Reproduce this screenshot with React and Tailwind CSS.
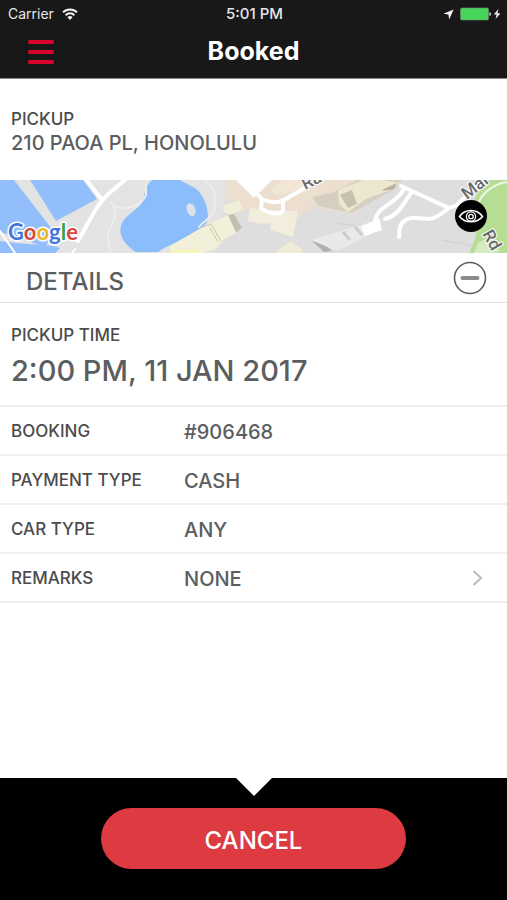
import React from 'react';

const details = [
  { label: "BOOKING", value: "#906468" },
  { label: "PAYMENT TYPE", value: "CASH" },
  { label: "CAR TYPE", value: "ANY" },
  { label: "REMARKS", value: "NONE", more: true },
];

function StatusBar() {
  return (
    <div className="grid grid-cols-3 items-center h-7 pl-2 pr-1.5 text-sm text-gray-200">
      <div className="flex items-center gap-2">
        <span className="font-normal">Carrier</span>
        <svg width="16" height="12" viewBox="0 0 16 12" fill="none" stroke="#f3f3f3" strokeWidth="2">
          <path d="M1 4.4a10 10 0 0 1 14 0" />
          <path d="M3.6 7.2a6.2 6.2 0 0 1 8.8 0" />
          <path d="M8 12 5.4 9.3a3.8 3.8 0 0 1 5.2 0z" fill="#f3f3f3" stroke="none" />
        </svg>
      </div>
      <span className="text-center text-[15px] font-medium">5:01 PM</span>
      <div className="flex items-center justify-end gap-1.5">
        <svg width="11" height="11" viewBox="0 0 11 11" fill="#f3f3f3">
          <path d="M10.6.4 6.2 10.6 5.4 5.6.4 4.8z" />
        </svg>
        {/* battery and charging bolt */}
        <svg width="41" height="14" viewBox="0 0 41 14">
          <rect x="0.5" y="1" width="28" height="12" rx="1.5" fill="#46d559" stroke="#7b8f7d" strokeWidth="0.6" />
          <path d="M29.4 5q1.8.4 1.8 2t-1.8 2z" fill="#d0d0d0" />
          <path d="M38.4 2 33.8 7.6h2.8L35.6 12l4.8-5.8h-3z" fill="#f3f3f3" />
        </svg>
      </div>
    </div>
  );
}

function MapArt() {
  return (
    <svg className="block w-full h-full" viewBox="0 0 507 73" preserveAspectRatio="xMidYMid slice">
      <rect width="507" height="73" fill="#dedede" />
      {/* land and water */}
      <path d="M0 0h230l-16 73H0z" fill="#e2e3e2" />
      <path d="M0 0h14l38 49-6 18L0 52z" fill="#92bffc" />
      <path d="M30 0h53l14 19-41 22z" fill="#92bffc" />
      <path d="M0 61l16 2 38 3 6 2-5 5H0z" fill="#92bffc" />
      <path d="M152 0c-5 5-7 9-8 17-1 11-16 15-22 26-5 12 3 22 14 29h22c10-7 22-11 33-17 9-5 16-9 17-18 0-9-3-17-8-24-4-6-12-8-20-13z" fill="#8bbcfb" />
      <path d="M187 25c3-3 7-1 8 3 1 3 1 7-2 8-4 1-8-7-6-11z" fill="#dbe3e8" />
      {/* blocks and buildings */}
      <path d="M228 0h175l2 11-52 24-40-9-16 13-47-10-17 5c-3-12-6-15-9-20z" fill="#ecdfd0" />
      <path d="M353 34 316 28l-18 14-5 18-24-15-26 5-18 23h170l40-73h-43z" fill="#dedede" />
      <path d="M223 26l16-6 3 9-12 6-6-3z" fill="#f1eed9" />
      <path d="M250 28l18 2 30 1-5 26-23-7 1-7-10 1-13-3z" fill="#f2eddc" />
      <path d="M170 66l31-18 27-13 8 18-12 6-7 9-14 5h-33z" fill="#f2f0d8" />
      <path d="M170 70l28-1 3 4h-31z" fill="#f5f5bd" />
      <path d="M228 35l6-1 8 14-6 4z" fill="#c4beae" />
      <path d="M203 47l8-3 10 17m-11-13 8 14" fill="none" stroke="#cbc7b4" />
      <path d="M277 71l14-10 12 9-2 3h-24z" fill="#efedd5" />
      <path d="M271 11l11-11h34l-14 10-26 5z" fill="#f1e6d5" />
      <path d="M312 17l20-4 25-13h45l-6 8-44 25-34-7z" fill="#d5cec1" />
      <path d="M338 10l25-10h18l20 3-13 8-22 8-18 13-9-8z" fill="#ece8cf" />
      <path d="M340 15l12-5 5 14-9 4z" fill="#c8c0ae" />
      <path d="M384 9l13-6-3 6-12 2z" fill="#bbb19f" />
      <path d="M312 61l12 3 8 7-8 1z" fill="#b0b0b1" />
      <path d="M311 60l56-17 14-4v10l-44 22z" fill="#e9e9e9" />
      <path d="M355 47l7 8m-19-3 7 8" stroke="#cccccc" strokeWidth="3" />
      <path d="M337 43l20 3m85 14 33 6" stroke="#cfcfcf" fill="none" />
      {/* park */}
      <path d="M507 0v73h-38c5-10 8-18 8-29-6-14-3-28 4-38l10-6z" fill="#b5dd93" />
      <path d="M474 73l4-10 8-4 14 11-3 4z" fill="#d3ecbf" />
      {/* roads */}
      <g fill="none" stroke="#fff" strokeLinecap="round" strokeLinejoin="round">
        <path d="M85-2l17 22M127-2c-8 8-19 14-26 24-8 10-15 26-23 39" strokeWidth="4" />
        <path d="M0 51l15 22M72 73l3-4" strokeWidth="2" />
        <path d="M110 22c10 8 4 20-1 28-2 9 0 16 2 23M116 27c14 3 26-2 30-12V0M205 0c10 8 12 20 9 30-2 8-10 10-15 17" strokeWidth="2" stroke="#ececec" />
        <path d="M258 15l4 4c8 3 14 5 22 1l38-22M262 19l-1 9c6 5 17 8 22 3V20" strokeWidth="4" />
        <path d="M401 6l48 22 8-3 22-22M449 28c-6 4-12 11-20 11-11-1-20-3-26 3-5 5-3 10-4 15M404 9c-6 11-15 14-22 20-5 4-7 8-7 14M411 13c-8 11-12 22-26 26" strokeWidth="4" />
        <path d="M507 2c-9 1-24 8-29 22" stroke="#eef8e6" strokeWidth="2" />
      </g>
      <path d="M361 47l18-9 3 12-17 6z" fill="#fff" />
      <g className="font-['Roboto',sans-serif] text-[17px] font-medium" fill="#66686a" stroke="#fff" strokeWidth="2" paintOrder="stroke">
        <text transform="translate(305 10) rotate(-26)">Ra</text>
        <text transform="translate(467 20) rotate(-38)">Mai</text>
        <text transform="translate(482 54) rotate(60)">Rd</text>
      </g>
      <text x="8" y="60" className="font-['Lato',sans-serif] text-[22px] font-bold" stroke="#fff" strokeWidth="3" strokeLinejoin="round" paintOrder="stroke">
        <tspan fill="#4274dc">G</tspan>
        <tspan fill="#d9473f">o</tspan>
        <tspan fill="#f0b429">o</tspan>
        <tspan fill="#4274dc">g</tspan>
        <tspan fill="#3a9d54">l</tspan>
        <tspan fill="#d9473f">e</tspan>
      </text>
    </svg>
  );
}

// white arrow that hangs over the section below
function Notch() {
  return (
    <svg className="absolute top-0 left-1/2 -translate-x-1/2" width="36" height="18" viewBox="0 0 36 18">
      <path d="M0 0h36L18 18z" fill="#fff" />
    </svg>
  );
}

function DetailRow({ item }) {
  return (
    <div className="flex items-center h-[49px] pl-[11px] pr-6 border-b-2 border-[#efefef]">
      <dt className="w-[173px] shrink-0 pt-0.5 text-[17px] text-[#4b4b4d]">{item.label}</dt>
      <dd className="flex flex-1 items-center justify-between text-xl text-[#5b5e60]">
        <span className="pt-0.5">{item.value}</span>
        {item.more && (
          <button type="button" aria-label="Edit remarks">
            <svg className="block" width="11" height="16" viewBox="0 0 11 16" fill="none" stroke="#bcbcbc" strokeWidth="2">
              <path d="M1.5 1 9 8l-7.5 7" />
            </svg>
          </button>
        )}
      </dd>
    </div>
  );
}

function App() {
  return (
    <div className="flex flex-col min-h-screen bg-white font-['Inter',sans-serif] font-medium">
      <header className="h-[79px] bg-[#181818] border-b border-[#8a8a8a]">
        <StatusBar />
        <div className="grid grid-cols-[1fr_auto_1fr] items-center h-12 px-7">
          <button type="button" aria-label="Menu" className="justify-self-start">
            <svg className="block" width="26" height="24" viewBox="0 0 26 24" fill="#d8032a">
              <rect width="26" height="4" rx="1.5" />
              <rect y="10" width="26" height="4" rx="1.5" />
              <rect y="20" width="26" height="4" rx="1.5" />
            </svg>
          </button>
          <h1 className="text-[25px] font-bold text-white">Booked</h1>
        </div>
      </header>

      <section className="h-[101px] px-[11px] pt-7">
        <h2 className="text-[17px] leading-6 text-[#4b4b4d]">PICKUP</h2>
        <p className="text-xl leading-6 text-[#5b5e60]">210 PAOA PL, HONOLULU</p>
      </section>

      <section className="relative h-[73px]">
        <MapArt />
        <Notch />
        <button type="button" aria-label="Show map" className="absolute top-5 right-5 size-8 rounded-full bg-black">
          <svg className="block size-8" viewBox="0 0 32 32" fill="none" stroke="#fff">
            <path d="M4.5 16.5C10 8.5 22 8.5 27.5 16.5 22 23.5 10 23.5 4.5 16.5z" strokeWidth="1.6" />
            <circle cx="16" cy="16.5" r="4.6" strokeWidth="1.3" />
            <circle cx="16" cy="16.5" r="2.2" strokeWidth="1.3" />
          </svg>
        </button>
      </section>

      <section className="flex items-center justify-between h-[50px] pl-[26px] pr-5 border-b border-[#e4e4e4]">
        <h2 className="pt-2 text-2xl text-[#5b5e60]">DETAILS</h2>
        <button type="button" aria-label="Collapse details">
          <svg className="block" width="34" height="34" viewBox="0 0 34 34" fill="none">
            <circle cx="17" cy="17" r="15.5" stroke="#5b5b5d" strokeWidth="1.6" />
            <path d="M9.5 17h15" stroke="#8b8b8d" strokeWidth="4" strokeLinecap="round" />
          </svg>
        </button>
      </section>

      <section className="h-[104px] px-[11px] pt-5 border-b-2 border-[#efefef]">
        <h3 className="text-[17px] leading-6 text-[#4b4b4d]">PICKUP TIME</h3>
        <p className="pt-1 text-[29px] leading-10 text-[#5b5e60]">2:00 PM, 11 JAN 2017</p>
      </section>

      <dl>
        {details.map((item) => (
          <DetailRow key={item.label} item={item} />
        ))}
      </dl>

      <footer className="relative flex justify-center h-[122px] mt-auto pt-[30px] bg-black">
        <Notch />
        <button type="button" className="w-3/5 h-[61px] pt-1 rounded-full bg-[#dd3a41] text-2xl text-white">
          CANCEL
        </button>
      </footer>
    </div>
  );
}

export default App;
